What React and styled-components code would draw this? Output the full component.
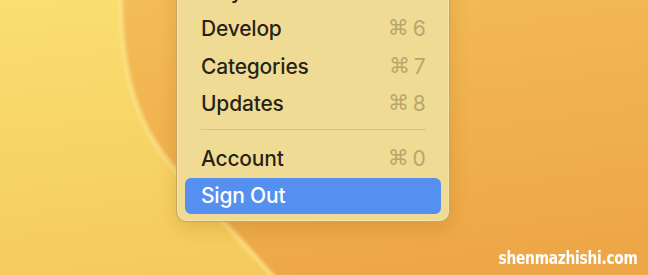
import React from "react";
import styled, { createGlobalStyle } from "styled-components";

const GlobalStyle = createGlobalStyle`
  html, body {
    margin: 0;
    padding: 0;
    background: #f5c85c;
  }
  body {
    font-family: Inter, "Noto Sans", "Liberation Sans", sans-serif;
  }
`;

const Screen = styled.div`
  position: relative;
  width: 648px;
  height: 275px;
  overflow: hidden;
`;

const Wallpaper = styled.svg`
  position: absolute;
  inset: 0;
  width: 648px;
  height: 275px;
`;

const Menu = styled.div`
  position: relative;
  z-index: 1;
  box-sizing: border-box;
  width: 273.5px;
  margin: -36.5px 0 0 176px;
  padding: 8px 8px 7px;
  background: #efdb94;
  border: 1px solid rgba(150, 105, 30, 0.45);
  border-radius: 10px;
  box-shadow: inset 0 0 0 1px rgba(255, 250, 220, 0.35),
    0 6px 18px rgba(150, 90, 10, 0.22);
`;

const Item = styled.div`
  display: flex;
  align-items: center;
  justify-content: space-between;
  height: ${(p) => (p.$active ? "36px" : "37.5px")};
  padding: 0 15px 0 16px;
  border-radius: 6px;
  font-size: 21px;
  font-weight: 500;
  letter-spacing: -0.2px;
  color: ${(p) => (p.$active ? "#ffffff" : "rgba(0, 0, 0, 0.86)")};
  background: ${(p) => (p.$active ? "#5590f0" : "transparent")};
`;

const Shortcut = styled.span`
  display: flex;
  align-items: center;
  gap: 4px;
  color: #b8a76d;
  font-size: 21px;
  font-weight: 400;
`;

const CmdGlyph = styled.span`
  font-family: "DejaVu Sans", sans-serif;
  font-size: 21px;
  line-height: 1;
`;

const Separator = styled.div`
  height: 17.5px;
  padding-top: 6.5px;
  box-sizing: border-box;

  &::after {
    content: "";
    display: block;
    height: 1px;
    margin: 0 15px 0 16px;
    background: #d7c481;
  }
`;

const Watermark = styled.div`
  position: absolute;
  right: 10px;
  bottom: 7px;
  z-index: 2;
  color: #ffffff;
  font-family: "DejaVu Sans Condensed", "DejaVu Sans", sans-serif;
  font-weight: 700;
  font-size: 18px;
  letter-spacing: -0.3px;
  transform: scaleX(0.85);
  transform-origin: right center;
`;

const items = [
  { label: "Play", key: "5" },
  { label: "Develop", key: "6" },
  { label: "Categories", key: "7" },
  { label: "Updates", key: "8" },
];

const MenuRow = ({ label, keyName, active }) => (
  <Item $active={active}>
    <span>{label}</span>
    {keyName && (
      <Shortcut>
        <CmdGlyph>⌘</CmdGlyph>
        {keyName}
      </Shortcut>
    )}
  </Item>
);

const Backdrop = () => (
  <Wallpaper viewBox="0 0 648 275" preserveAspectRatio="none">
    <defs>
      <linearGradient id="yellow" x1="0" y1="0" x2="0.3" y2="1">
        <stop offset="0" stopColor="#fadf71" />
        <stop offset="1" stopColor="#f5ca5c" />
      </linearGradient>
      <linearGradient id="orange" x1="0" y1="0" x2="0.25" y2="1">
        <stop offset="0" stopColor="#f3bd57" />
        <stop offset="1" stopColor="#eea747" />
      </linearGradient>
      <filter id="soft" x="-20%" y="-20%" width="140%" height="140%">
        <feGaussianBlur stdDeviation="1.6" />
      </filter>
    </defs>
    <rect width="648" height="275" fill="url(#yellow)" />
    <path
      d="M121 -10 C120 60, 132 120, 172 166 C200 196, 250 250, 285 290 L660 290 L660 -10 Z"
      fill="url(#orange)"
    />
    <path
      d="M121 -10 C120 60, 132 120, 172 166 C200 196, 250 250, 285 290"
      fill="none"
      stroke="#fbe28a"
      strokeOpacity="0.75"
      strokeWidth="5"
      filter="url(#soft)"
    />
  </Wallpaper>
);

const App = () => {
  return (
    <>
      <GlobalStyle />
      <Screen>
        <Backdrop />
        <Menu>
          {items.map((it) => (
            <MenuRow key={it.label} label={it.label} keyName={it.key} />
          ))}
          <Separator />
          <MenuRow label="Account" keyName="0" />
          <MenuRow label="Sign Out" active />
        </Menu>
        <Watermark>shenmazhishi.com</Watermark>
      </Screen>
    </>
  );
};

export default App;
